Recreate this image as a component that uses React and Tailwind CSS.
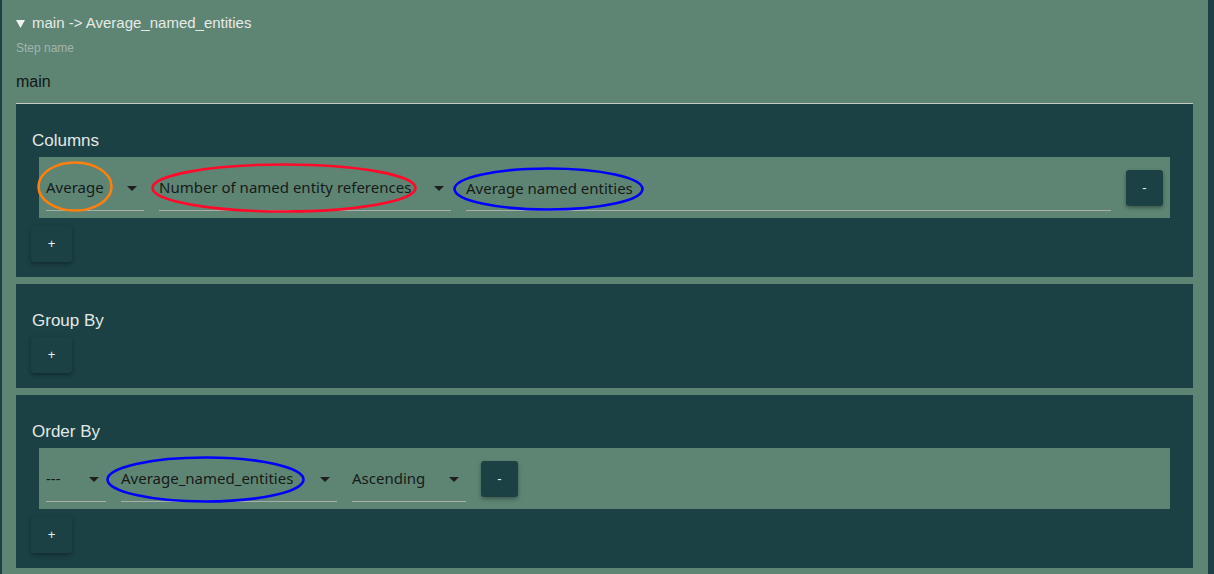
import React from "react";

const Arrow = () => (
  <svg width="10" height="5" viewBox="0 0 10 5" className="shrink-0">
    <path d="M0 0 L10 0 L5 5 Z" fill="#1e1e1e" />
  </svg>
);

function Select({ w, text }) {
  return (
    <div
      className={`${w} h-[41px] shrink-0 border-b border-[#a9aeab] flex items-start justify-between pt-[7px] pr-[7px]`}
    >
      <span className="leading-[20px] text-[15px] text-[#161a18] whitespace-nowrap" style={{ fontFamily: '"Noto Sans", sans-serif' }}>
        {text}
      </span>
      <div className="h-[20px] flex items-center pt-[2px]">
        <Arrow />
      </div>
    </div>
  );
}

function TextField({ text }) {
  return (
    <div className="flex-1 h-[41px] border-b border-[#a9aeab] pt-[7px]">
      <span className="leading-[20px] text-[15px] text-[#161a18] whitespace-nowrap" style={{ fontFamily: '"Noto Sans", sans-serif' }}>
        {text}
      </span>
    </div>
  );
}

function SmallBtn({ children, w = "w-[41px]" }) {
  return (
    <button
      className={`${w} h-[36px] shrink-0 rounded-[3px] bg-[#1b4144] shadow-[0_2px_4px_rgba(0,0,0,0.35)] flex items-center justify-center text-[#e6f2f2] text-[13px]`}
      style={{ fontFamily: '"Liberation Sans", Arial, sans-serif' }}
    >
      {children}
    </button>
  );
}

function Panel({ title, children }) {
  return (
    <div className="bg-[#1b4144] px-[15px] pt-[27px] pb-[15px]">
      <div className="h-[20px] leading-[20px] text-[17px] text-[#e3e8e5] pl-[1px] mb-[6px]">{title}</div>
      {children}
    </div>
  );
}

function Row({ children }) {
  return (
    <div className="mx-[8px] mb-[8px] bg-[#5e8574] pl-[7px] pr-[7px] pt-[13px] pb-[7px] flex items-start gap-[15px]">
      {children}
    </div>
  );
}

export default function App() {
  return (
    <div
      className="relative w-[1214px] h-[574px] overflow-hidden bg-[#1b4144] pl-[2px] pr-[6px]"
      style={{ fontFamily: '"Liberation Sans", Arial, sans-serif' }}
    >
      <div className="h-full bg-[#5e8574] pl-[14px] pr-[15px] pt-[14px]">
        <div className="flex items-center h-[18px] leading-[18px] text-[15px] text-[#e6ebe8]">
          <svg width="9" height="8" viewBox="0 0 9 8" className="mr-[7px] mt-[1px] shrink-0">
            <path d="M0 0 L9 0 L4.5 8 Z" fill="#eef2f0" />
          </svg>
          <span>main -&gt; Average_named_entities</span>
        </div>
        <div className="mt-[9px] h-[14px] leading-[14px] text-[12px] text-[#a3b4ab]">Step name</div>
        <div className="mt-[18px] pb-[12px] border-b border-[#c3cbc7] h-[31px] leading-[18px] text-[16px] text-[#121614]">
          main
        </div>
        <div className="flex flex-col gap-[7px]">
          <Panel title="Columns">
            <Row>
              <Select w="w-[98px]" text="Average" />
              <Select w="w-[292px]" text="Number of named entity references" />
              <TextField text="Average named entities" />
              <SmallBtn w="w-[37px]">-</SmallBtn>
            </Row>
            <SmallBtn>+</SmallBtn>
          </Panel>
          <Panel title="Group By">
            <SmallBtn>+</SmallBtn>
          </Panel>
          <Panel title="Order By">
            <Row>
              <Select w="w-[60px]" text="---" />
              <Select w="w-[216px]" text="Average_named_entities" />
              <Select w="w-[114px]" text="Ascending" />
              <SmallBtn w="w-[37px]">-</SmallBtn>
            </Row>
            <SmallBtn>+</SmallBtn>
          </Panel>
        </div>
      </div>
      <svg className="absolute left-0 top-0 pointer-events-none" width="1214" height="574">
        <ellipse cx="75" cy="186.5" rx="36.5" ry="24" fill="none" stroke="#ff7f0e" strokeWidth="2.6" />
        <ellipse cx="284" cy="188" rx="131.5" ry="23.5" fill="none" stroke="#ff0a2a" strokeWidth="2.6" />
        <ellipse cx="548.5" cy="189" rx="94" ry="20.5" fill="none" stroke="#0000ff" strokeWidth="2.6" />
        <ellipse cx="205.5" cy="479.5" rx="98" ry="22" fill="none" stroke="#0000ff" strokeWidth="2.6" />
      </svg>
    </div>
  );
}
